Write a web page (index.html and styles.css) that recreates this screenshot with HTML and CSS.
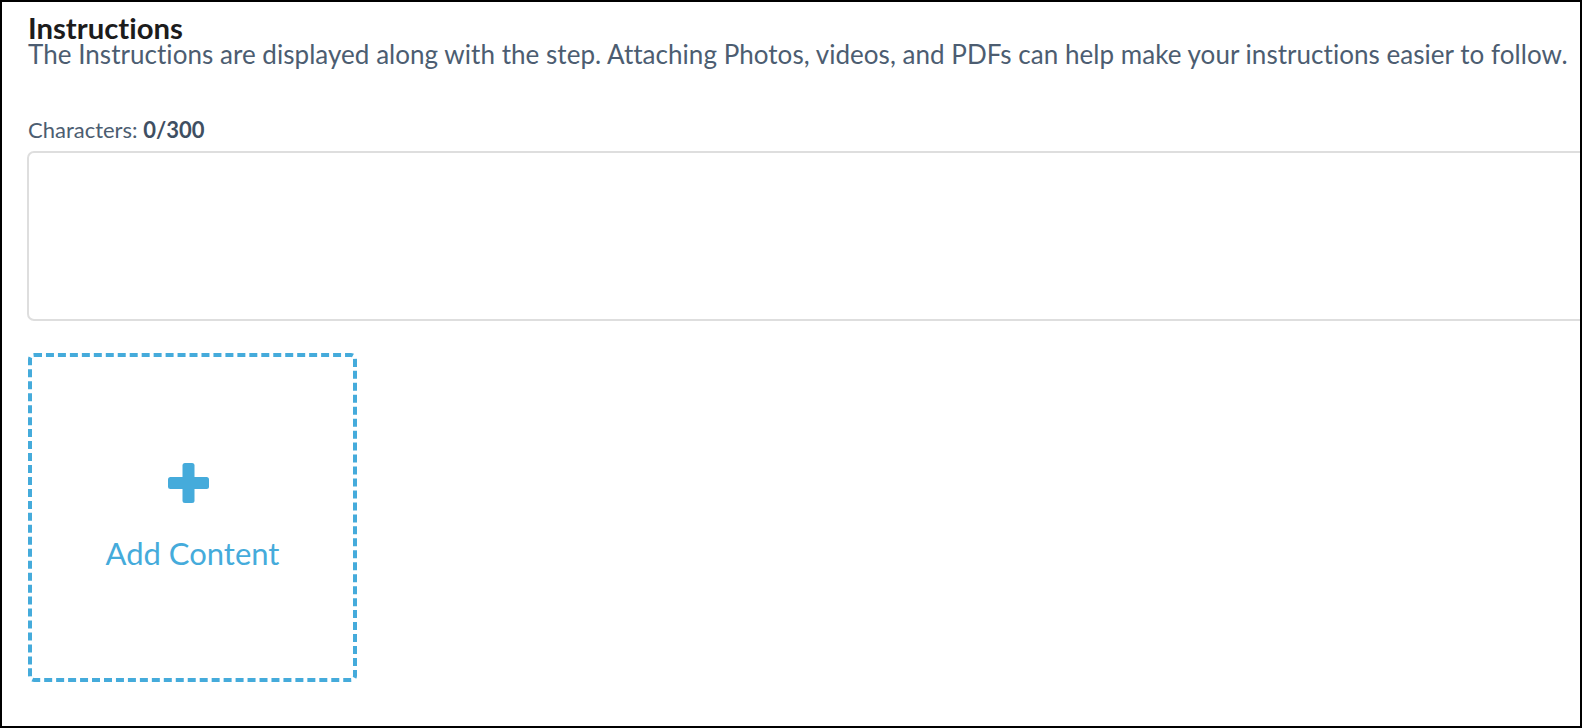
FILE: index.html
```html
<!DOCTYPE html>
<html lang="en">
<head>
  <meta charset="UTF-8" />
  <meta name="viewport" content="width=device-width, initial-scale=1.0"/>
  <title>Step Instructions</title>
  <link rel="stylesheet" href="styles.css">
</head>
<body>

  <div class="frame">
    <h3 class="title">Instructions</h3>
    <p class="hint">The Instructions are displayed along with the step. Attaching Photos, videos, and PDFs can help make your instructions easier to follow.</p>

    <div class="counter">Characters: <strong>0/300</strong></div>
    <textarea class="instructions-box"></textarea>

    <div class="add-content">
      <svg class="plus" width="41" height="40" viewBox="0 0 41 40">
        <rect x="14.5" y="0" width="12" height="40" rx="2.5" fill="#45abdb"/>
        <rect x="0" y="14" width="41" height="12" rx="2.5" fill="#45abdb"/>
      </svg>
      <span class="add-label">Add Content</span>
    </div>
  </div>

</body>
</html>
```

FILE: styles.css
```css
html, body {
  margin: 0;
  height: 100%;
}
body {
  font-family: Lato, 'Noto Sans', sans-serif;
  font-variant-ligatures: no-common-ligatures;
  background: #fff;
}
.frame {
  box-sizing: border-box;
  height: 728px;
  border: 2px solid #000;
  padding: 11px 0 0 26px;
  overflow: hidden;
}
.title {
  margin: 0;
  font-size: 29.3px;
  font-weight: bold;
  color: #1c1c1c;
  line-height: 29px;
}
.hint {
  margin: -1px 0 0;
  font-size: 26px;
  letter-spacing: 0.04px;
  line-height: 26px;
  color: #4c5d71;
  white-space: nowrap;
}
.counter {
  margin-top: 52px;
  font-size: 22px;
  line-height: 22px;
  color: #4c5d71;
}
.counter strong {
  color: #3f4f62;
}
.instructions-box {
  display: block;
  box-sizing: border-box;
  margin: 10px 0 0 -1px;
  width: 1600px;
  height: 170px;
  border: 2px solid #dedede;
  border-radius: 7px;
  resize: none;
  outline: none;
}
.add-content {
  box-sizing: border-box;
  margin-top: 32px;
  width: 329px;
  height: 329px;
  padding-top: 106px;
  border: 4px dashed #45abdb;
  border-radius: 6px;
  display: flex;
  flex-direction: column;
  align-items: center;
  color: #45abdb;
}
.plus {
  display: block;
  margin-right: 8px;
}
.add-label {
  margin-top: 35px;
  font-size: 31px;
  line-height: 31px;
}
```
